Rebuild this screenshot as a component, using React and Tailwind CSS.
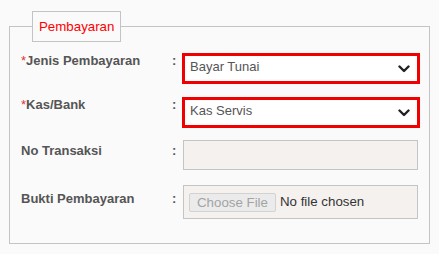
function Chevron() {
  return (
    <svg width="12" height="8" viewBox="0 0 12 8" className="pointer-events-none absolute right-[7px] top-1/2 -translate-y-1/2">
      <path d="M1.5 1.5 L6 6 L10.5 1.5" fill="none" stroke="#222" strokeWidth="2.4" strokeLinecap="round" strokeLinejoin="round" />
    </svg>
  );
}

function Row({ label, required, labelOffset, className, children }) {
  return (
    <div className={`flex items-start ${className}`}>
      <div className="w-[151px] text-[13px] leading-4 font-bold text-[#555]" style={{ paddingTop: labelOffset }}>
        {required && <span className="font-normal text-[#e5322d]">*</span>}
        {label}
      </div>
      <div className="w-[10px] text-[13px] leading-4 font-bold text-[#555]" style={{ paddingTop: labelOffset }}>
        :
      </div>
      <div className="flex-1">{children}</div>
    </div>
  );
}

function SelectBox({ value }) {
  return (
    <div className="relative flex h-[31px] items-center border-[3px] border-[#f00000] bg-white pl-[5px] pb-[3px] text-[13px] leading-4 text-[#555]">
      {value}
      <Chevron />
    </div>
  );
}

export default function App() {
  return (
    <div className="min-h-screen w-[439px] bg-[#fafafa] pt-[11px] pl-[9px] font-['Liberation_Sans',Arial,sans-serif]">
      <fieldset className="w-[421px] border border-[#c4c4c4] pl-[11px] pr-[9px] pt-[11px] pb-[24px]">
        <legend className="ml-[11px] border border-[#c4c4c4] px-[6px] py-[7px] text-[13.3px] leading-[15px] text-[#ff0000]">
          Pembayaran
        </legend>

        <Row label="Jenis Pembayaran" required labelOffset={0} className="">
          <SelectBox value="Bayar Tunai" />
        </Row>

        <Row label="Kas/Bank" required labelOffset={0} className="mt-[13px]">
          <SelectBox value="Kas Servis" />
        </Row>

        <Row label="No Transaksi" labelOffset={3} className="mt-[12px]">
          <input
            disabled
            className="ml-[1px] block h-[30px] w-[235px] border border-[#c4c4c4] bg-[#f4f1ef]"
          />
        </Row>

        <Row label="Bukti Pembayaran" labelOffset={6} className="mt-[15px]">
          <div className="ml-[1px] flex h-[34px] w-[235px] items-center border border-[#c4c4c4] bg-[#f4f1ef] pl-[5px]">
            <button
              disabled
              className="h-[19px] rounded-[2px] border border-[#d2d2d2] bg-[#ebebeb] px-[7px] text-[13.3px] leading-[17px] text-[#a3a3a3]"
            >
              Choose File
            </button>
            <span className="ml-[4px] text-[13.3px] text-[#333]">No file chosen</span>
          </div>
        </Row>
      </fieldset>
    </div>
  );
}
